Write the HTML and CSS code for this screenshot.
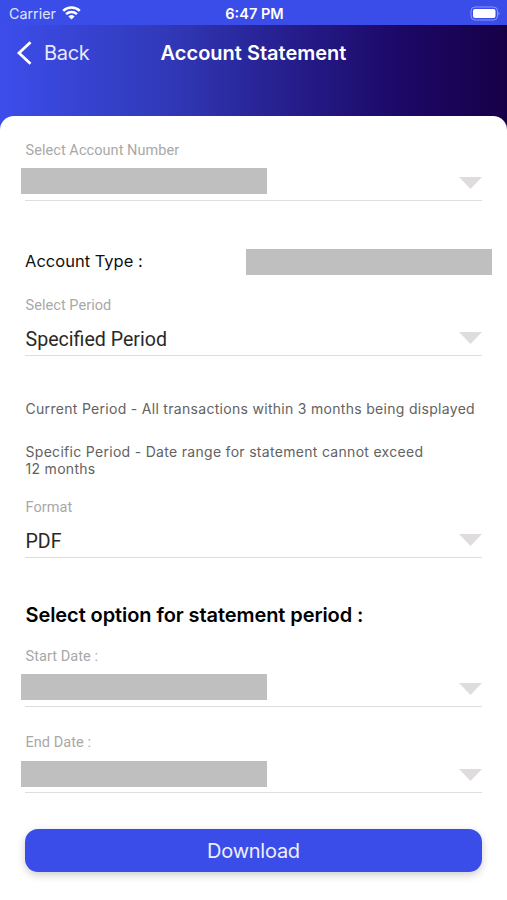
FILE: index.html
```html
<!DOCTYPE html>
<html lang="en">
<head>
<meta charset="utf-8">
<title>Account Statement</title>
<link rel="stylesheet" href="styles.css">
</head>
<body>
<div class="status">
  <div class="carrier"><span>Carrier</span>
    <svg class="wifi" width="19" height="14" viewBox="0 0 19 14" fill="none" stroke="#fff" stroke-width="2.5"><path d="M1.2 4.8a12 12 0 0 1 16.6 0"/><path d="M4.1 8.1a7.9 7.9 0 0 1 10.8 0"/><path d="M9.5 13.6 6.4 10.5a4.5 4.5 0 0 1 6.2 0Z" fill="#fff" stroke="none"/></svg>
  </div>
  <time class="clock">6:47 PM</time>
  <svg class="battery" width="31" height="15" viewBox="0 0 31 15"><rect x="2" y="1" width="26.5" height="13" rx="4" fill="none" stroke="#8d97f5"/><rect x="4" y="3" width="22.5" height="9" rx="2" fill="#fff"/><path d="M29.5 5.5q2 2 0 4Z" fill="#8d97f5"/></svg>
</div>
<header class="header">
  <nav class="navbar">
    <a class="back"><svg width="16" height="24" viewBox="0 0 16 24" fill="none" stroke="#fff" stroke-width="2.8"><path d="M14.5 1.3 3 12 14.5 22.7"/></svg><span>Back</span></a>
    <h1 class="title">Account Statement</h1>
    <span></span>
  </nav>
</header>
<main class="card">
  <section class="field">
    <label class="label">Select Account Number</label>
    <div class="value"><span class="mask"></span><i class="arrow"></i></div>
  </section>
  <section class="account-type"><span class="type-label">Account Type :</span><span class="mask"></span></section>
  <section class="field">
    <label class="label">Select Period</label>
    <div class="value"><span class="text">Specified Period</span><i class="arrow"></i></div>
  </section>
  <p class="note current">Current Period - All transactions within 3 months being displayed</p>
  <p class="note specific">Specific Period - Date range for statement cannot exceed<br>12 months</p>
  <section class="field">
    <label class="label">Format</label>
    <div class="value"><span class="text">PDF</span><i class="arrow"></i></div>
  </section>
  <h2 class="heading">Select option for statement period :</h2>
  <section class="field">
    <label class="label">Start Date :</label>
    <div class="value"><span class="mask"></span><i class="arrow"></i></div>
  </section>
  <section class="field end">
    <label class="label">End Date :</label>
    <div class="value"><span class="mask"></span><i class="arrow"></i></div>
  </section>
  <button class="download">Download</button>
</main>
</body>
</html>
```
FILE: styles.css
```css
* { box-sizing: border-box; }
body { margin: 0; width: 507px; height: 900px; overflow: hidden; background: #fff; font-family: Inter, sans-serif; }
.status { height: 25px; padding: 1px 7px 0 9px; display: grid; grid-template-columns: 1fr auto 1fr; align-items: center; background: #3b4de8; color: #fff; }
.carrier { display: flex; align-items: center; gap: 6px; font-size: 14.3px; color: #dfe2ff; }
.clock { font-size: 14.5px; font-weight: 600; }
.battery { justify-self: end; }
.header { height: 105px; background: linear-gradient(90deg, #3c4dea 0, #3139b8 33%, #272090 55%, #1c0968 78%, #170047 100%); }
.navbar { height: 54px; padding: 1px 16px 0; display: grid; grid-template-columns: 1fr auto 1fr; align-items: center; color: #fff; }
.back { display: flex; align-items: center; gap: 12px; font-size: 20px; letter-spacing: -.3px; color: #e8e9ff; }
.title { margin: 0; font-size: 20px; font-weight: 600; }
.card { height: 784px; margin-top: -14px; padding: 26px 25px 0; border-radius: 14px 14px 0 0; background: #fff; }
.field { height: 59px; border-bottom: 1px solid #dedede; }
.label { display: block; height: 17px; padding-left: .5px; font: 14.5px/17px Roboto, sans-serif; letter-spacing: .06px; color: #a8a8a8; }
.value { height: 41px; display: flex; align-items: center; justify-content: space-between; }
.text { font: 19.6px/24px Roboto, sans-serif; color: #292929; padding: 10px 0 0 .5px; }
.mask { width: 246px; height: 26px; margin-left: -4px; margin-top: 2px; background: #bfbfbf; }
.arrow { width: 23px; height: 12px; margin-top: 7px; background: #dfdcdd; clip-path: polygon(0 0, 100% 0, 50% 100%); }
.account-type { height: 27px; margin: 47px -10px 22px 0; display: flex; align-items: center; justify-content: space-between; }
.type-label { padding-bottom: 2px; font-size: 16.5px; color: #111; }
.account-type .mask { margin-top: 0; }
.note { margin: 0; padding-left: .5px; font-size: 14px; letter-spacing: .3px; line-height: 17px; color: #626262; white-space: nowrap; }
.current { margin-top: 44px; }
.specific { margin: 26px 0 22px; }
.heading { margin: 44px 0 20px; padding-left: .5px; font-size: 20px; line-height: 26px; font-weight: 600; letter-spacing: -.08px; color: #000; }
.end { margin-top: 27px; }
.end .mask { margin-top: 4px; }
.download { display: block; width: 457px; height: 43px; margin-top: 36px; padding: 2px 0 0; border: 0; border-radius: 13px; background: #3b4de8; box-shadow: 0 3px 9px #0003; font: 20px/41px Inter, sans-serif; letter-spacing: -.25px; color: #eeefff; }
```
